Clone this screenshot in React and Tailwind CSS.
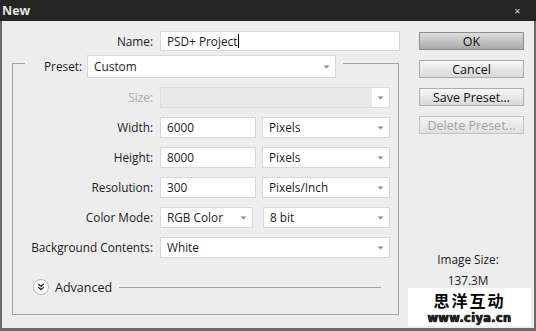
import React from "react";

const Arrow = () => (
  <svg width="7" height="4" viewBox="0 0 7 4" className="ml-auto mr-[5px] shrink-0">
    <path d="M0.5 0.5 L6.5 0.5 L3.5 3.5 Z" fill="#8a8a8a" />
  </svg>
);

const Select = ({ value, className = "" }) => (
  <div className={`flex items-center bg-white border border-[#d9d9d9] pl-[6px] ${className}`}>
    <span className="whitespace-nowrap">{value}</span>
    <Arrow />
  </div>
);

const Field = ({ value, className = "" }) => (
  <div className={`flex items-center bg-white border border-[#d9d9d9] pl-[6px] ${className}`}>
    {value}
  </div>
);

const Row = ({ label, children, muted }) => (
  <div className="flex h-[21px] items-center gap-[7px]">
    <div className={`w-[140px] text-right whitespace-nowrap ${muted ? "text-[#a9a9a9]" : ""}`}>{label}</div>
    {children}
  </div>
);

const Btn = ({ children, primary, disabled }) => (
  <div
    className={`h-[18px] w-[105px] flex items-center justify-center border text-[12.5px] ${
      primary
        ? "border-[#8d8d8d] bg-gradient-to-b from-[#dedede] to-[#a9a9a9] text-[#111]"
        : disabled
          ? "border-[#c4c4c4] bg-gradient-to-b from-[#f4f4f4] to-[#e0e0e0] text-[#a3a3a3]"
          : "border-[#adadad] bg-gradient-to-b from-[#f7f7f7] to-[#d9d9d9] text-[#111]"
    }`}
  >
    {children}
  </div>
);

export default function App() {
  return (
    <div className="relative w-[536px] h-[331px] bg-[#ededed] flex flex-col overflow-hidden font-['Open_Sans',sans-serif] text-[11.8px] text-[#1c1c1c] leading-[15px]">
      {/* title bar */}
      <div className="h-[21px] shrink-0 bg-[#252525] flex items-center justify-between pl-[2px] pr-[15px]">
        <span className="font-bold text-[#e4e4e4] text-[12.5px]">New</span>
        <span className="text-[#d8d8d8] text-[8px]">✕</span>
      </div>

      <div className="flex-1 flex border-l-2 border-r-2 border-b-[3px] border-[#6b6b6b]">
        {/* form */}
        <div className="pl-[10px] flex flex-col">
          <div className="mt-[10px] flex h-[20px] items-center gap-[7px]">
            <div className="w-[141px] text-right">Name:</div>
            <div className="w-[240px] h-full flex items-center bg-white border border-[#d9d9d9] pl-[6px]">
              PSD+ Project
              <span className="ml-px w-px h-[14px] bg-black" />
            </div>
          </div>

          <div className="mt-[4px] w-[387px]">
            <div className="flex h-[23px]">
              <div className="w-[13px] h-[15px] mt-[8px] border-t border-l border-[#a3a3a3]" />
              <div className="ml-[19px] self-center">Preset:</div>
              <Select value="Custom" className="ml-[5px] w-[249px] h-full" />
              <div className="flex-1 ml-[7px] h-[15px] mt-[8px] border-t border-r border-[#a3a3a3]" />
            </div>

            <div className="border-l border-r border-b border-[#a3a3a3] pt-[9px] pb-[19px] flex flex-col">
              <div className="flex flex-col gap-[9px]">
                <Row label="Size:" muted>
                  <div className="w-[230px] h-full flex border border-[#dcdcdc] bg-[#e9e9e9]">
                    <div className="ml-auto w-[17px] h-full bg-white flex items-center">
                      <Arrow />
                    </div>
                  </div>
                </Row>
                <Row label="Width:">
                  <Field value="6000" className="w-[96px] h-full" />
                  <Select value="Pixels" className="ml-[-1px] w-[128px] h-full" />
                </Row>
                <Row label="Height:">
                  <Field value="8000" className="w-[96px] h-full" />
                  <Select value="Pixels" className="ml-[-1px] w-[128px] h-full" />
                </Row>
                <Row label="Resolution:">
                  <Field value="300" className="w-[96px] h-full" />
                  <Select value="Pixels/Inch" className="ml-[-1px] w-[128px] h-full" />
                </Row>
                <Row label="Color Mode:">
                  <Select value="RGB Color" className="w-[93px] h-full" />
                  <Select value="8 bit" className="ml-[3px] w-[127px] h-full" />
                </Row>
                <Row label="Background Contents:">
                  <Select value="White" className="w-[230px] h-full" />
                </Row>
              </div>

              <div className="mt-[21px] flex items-center h-[16px]">
                <div className="ml-[20px] w-[16px] h-[16px] rounded-full bg-white border border-[#b9b9b9] flex items-center justify-center">
                  <svg width="8" height="8" viewBox="0 0 8 8">
                    <path d="M1.2 1 L4 3.3 L6.8 1 M1.2 4.3 L4 6.6 L6.8 4.3" stroke="#333" strokeWidth="1.3" fill="none" />
                  </svg>
                </div>
                <span className="ml-[6px] text-[12.5px]">Advanced</span>
                <div className="flex-1 ml-[7px] mr-[17px] h-px bg-[#a3a3a3]" />
              </div>
            </div>
          </div>
        </div>

        {/* buttons */}
        <div className="ml-[19px] w-[105px] flex flex-col">
          <div className="mt-[11px] flex flex-col gap-[10px]">
            <Btn primary>OK</Btn>
            <Btn>Cancel</Btn>
            <Btn>Save Preset...</Btn>
            <Btn disabled>Delete Preset...</Btn>
          </div>
          <div className="mt-[118px] pr-[7px] flex flex-col items-center">
            <div className="h-[15px] flex items-center">Image Size:</div>
            <div className="mt-[6px] h-[15px] flex items-center">137.3M</div>
          </div>
        </div>
      </div>

      {/* watermark */}
      <div className="absolute left-[408px] top-[288px] w-[123px] h-[38px] bg-white flex flex-col items-center justify-center">
        <div className="font-['Noto_Sans_CJK_SC',sans-serif] font-bold text-[16px] leading-[22px] text-black tracking-[2px]">
          思洋互动
        </div>
        <div className="font-['DejaVu_Sans',sans-serif] font-bold text-[11.5px] leading-[14px] text-[#222] tracking-[0.3px] [text-shadow:0_0_1px_#000,0_0_1px_#000]">
          www.ciya.cn
        </div>
      </div>
    </div>
  );
}
